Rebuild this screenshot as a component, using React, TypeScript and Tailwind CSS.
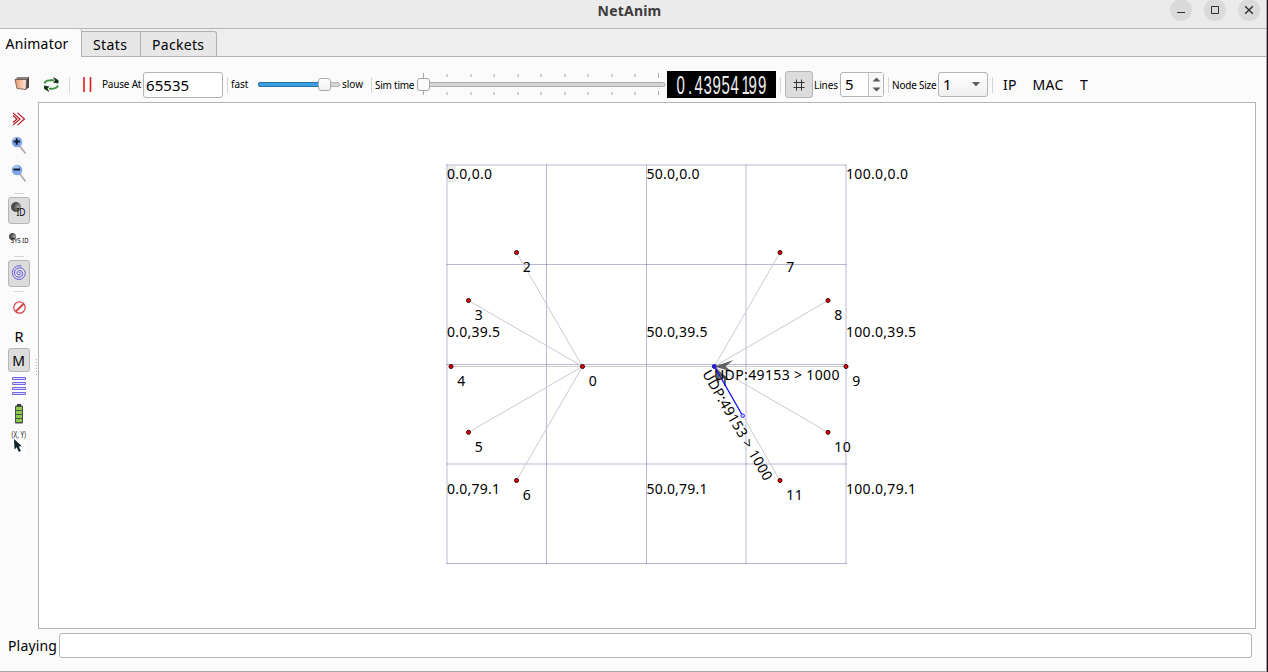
import type { ReactNode } from "react"

const nodes = [
  { id: "0", x: 582.5, y: 366.5 },
  { id: "2", x: 516.5, y: 252.5 },
  { id: "3", x: 468.5, y: 300.5 },
  { id: "4", x: 451, y: 366.5 },
  { id: "5", x: 468.5, y: 432.3 },
  { id: "6", x: 516.5, y: 480.5 },
  { id: "1", x: 714.3, y: 366.5 },
  { id: "7", x: 780, y: 252.5 },
  { id: "8", x: 828, y: 300.5 },
  { id: "9", x: 846, y: 366.5 },
  { id: "10", x: 828, y: 432.3 },
  { id: "11", x: 780, y: 480.5 },
]

const links = [
  ["0", "2"], ["0", "3"], ["0", "4"], ["0", "5"], ["0", "6"], ["0", "1"],
  ["1", "7"], ["1", "8"], ["1", "9"], ["1", "10"], ["1", "11"],
]

const gridX = [447, 546.5, 646.5, 746, 846]
const gridY = [165, 264.5, 364.5, 464, 563.5]

const coords = [
  { text: "0.0,0.0", x: 447, y: 179, w: 45 },
  { text: "50.0,0.0", x: 646.5, y: 179, w: 53 },
  { text: "100.0,0.0", x: 846, y: 179, w: 62 },
  { text: "0.0,39.5", x: 447, y: 337, w: 53 },
  { text: "50.0,39.5", x: 646.5, y: 337, w: 61 },
  { text: "100.0,39.5", x: 846, y: 337, w: 70 },
  { text: "0.0,79.1", x: 447, y: 494, w: 53 },
  { text: "50.0,79.1", x: 646.5, y: 494, w: 61 },
  { text: "100.0,79.1", x: 846, y: 494, w: 70 },
]

const ticks = [6.5, 30, 54, 77, 101, 124, 148, 171, 195, 218, 241.5]

// x of each character on the LCD
const lcd = [
  ["0", 9.5], [".", 21], ["4", 27.5], ["3", 36.5], ["9", 45.5],
  ["5", 54.5], ["4", 63.5], ["1", 74.5], ["9", 81.5], ["9", 91],
] as const

const find = (id: string) => nodes.find((n) => n.id === id)!

function Separator({ className }: { className: string }) {
  return <div className={`h-4 w-px shrink-0 bg-[#d6d6d6] ${className}`} />
}

function Cell({ className, children }: { className: string; children: ReactNode }) {
  return <div className={`flex h-[27px] shrink-0 items-center whitespace-nowrap ${className}`}>{children}</div>
}

function TitleBar() {
  return (
    <header className="flex h-[29px] shrink-0 border-b border-[#b7b7b7] bg-[#ebebeb]">
      <div className="w-[120px]" />
      <h1 className="flex-1 pt-px pr-[3px] text-center text-[14px] leading-[20px] font-bold tracking-[0.2px] text-[#3d3d3d]">
        NetAnim
      </h1>
      <div className="flex w-[124px] gap-[12px] pl-[28px]">
        <div className="-mt-px size-[22px] rounded-full bg-[#dadada]">
          <svg width="22" height="22" fill="none" stroke="#2e2e2e">
            <path d="M7 13.5h8" />
          </svg>
        </div>
        <div className="-mt-px size-[22px] rounded-full bg-[#dadada]">
          <svg width="22" height="22" fill="none" stroke="#2e2e2e">
            <path d="M7.5 7.5h7v7h-7z" />
          </svg>
        </div>
        <div className="-mt-px size-[22px] rounded-full bg-[#dadada]">
          <svg width="22" height="22" fill="none" stroke="#2e2e2e" strokeWidth="1.4">
            <path d="M7.2 7.2l7.6 7.6M14.8 7.2l-7.6 7.6" />
          </svg>
        </div>
      </div>
    </header>
  )
}

function Tabs() {
  return (
    <nav className="flex h-[28px] shrink-0 items-end bg-[#eeeeee] text-[14px]">
      <div className="h-[28px] w-[82px] rounded-tr-[3px] border-r border-[#b0b0b0] bg-[#fbfbfb] pt-[5px] pl-[5.5px] leading-[20px] tracking-[0.2px]">
        Animator
      </div>
      <div className="h-[26px] w-[59px] border-t border-r border-b border-[#b0b0b0] bg-[#e7e7e7] pt-[3px] pl-[11px] leading-[20px] tracking-[0.4px]">
        Stats
      </div>
      <div className="h-[26px] w-[76px] rounded-tr-[3px] border-t border-r border-b border-[#b0b0b0] bg-[#e7e7e7] pt-[3px] pl-[11px] leading-[20px] tracking-[0.3px]">
        Packets
      </div>
      <div className="h-[28px] flex-1 border-b border-[#b0b0b0]" />
    </nav>
  )
}

function Toolbar() {
  return (
    <div className="flex h-[45px] shrink-0 items-center pt-[10px] text-[10px]">
      <Cell className="w-[28px] pl-[14px]">
        <svg width="16" height="15" className="-mt-[3px] shrink-0">
          <defs>
            <linearGradient id="folder" x1="0" x2="1">
              <stop offset="0" stopColor="#e8976c" />
              <stop offset="1" stopColor="#fbe9df" />
            </linearGradient>
          </defs>
          <path d="M3.500 1h11.500v10.500L12 13.500 4 12z" fill="#4a4745" />
          <path d="M1 3.500L3.500 1H15l-2.500 2.500z" fill="#85817e" />
          <path d="M1 3.500h11.500L12 13.500 3 12.500z" fill="url(#folder)" stroke="#6a5145" strokeWidth=".8" />
        </svg>
      </Cell>
      <Cell className="w-[41px] pl-[15px]">
        <svg width="17" height="17" className="shrink-0" fill="none" strokeWidth="2">
          <path d="M1.500 7.500C2.500 4.500 5 4 11 4.300" stroke="#3f9142" />
          <path d="M10 .8L15.500 4.200V7.500L10 6.500 12 4.500z" fill="#173319" />
          <path d="M15 9.500c-1 3-3.500 3.500-9 3.200" stroke="#3f9142" />
          <path d="M6.500 16.200L1 12.800V9.500l5.500 1-2 2z" fill="#173319" />
        </svg>
      </Cell>
      <Separator className="" />
      <Cell className="w-[32px] pl-[12.5px]">
        <svg width="9" height="15" className="-mt-px shrink-0" stroke="#d9201f" strokeWidth="1.6">
          <path d="M1 0v15M7.500 0v15" />
        </svg>
      </Cell>
      <Cell className="w-[41px] tracking-[-0.2px]">Pause At</Cell>
      <div className="h-[26px] w-[80px] shrink-0 rounded-[3px] border border-[#b4b4b4] bg-white pl-[2px] text-[15px] leading-[24px] tracking-[0.05px]">
        65535
      </div>
      <Separator className="ml-[4px]" />
      <Cell className="w-[30px] pl-[3px]">fast</Cell>
      <Cell className="w-[84px]">
        <div className="flex h-[5px] w-[82px] items-center rounded-[2px] border border-[#b5b5b5] bg-[#d4d4d4]">
          <div className="-ml-px h-[5px] w-[62px] shrink-0 rounded-l-[2px] border border-[#2574a9] bg-[#3e9fe0]" />
          <div className="-ml-[2px] h-[13px] w-[13px] shrink-0 rounded-[3px] border border-[#a9a9a9] bg-linear-to-b from-white to-[#f1f1f1]" />
        </div>
      </Cell>
      <Cell className="w-[29px]">slow</Cell>
      <Separator className="" />
      <Cell className="w-[45px] pl-[3px] pt-[2px] tracking-[-0.25px]">Sim time</Cell>
      <Cell className="w-[250px]">
        <svg width="249" height="24" className="-mt-px shrink-0">
          {ticks.map((x, i) => (
            <path
              key={x}
              d={i === 0 || i === 10 ? `M${x} 1v5M${x} 19v4` : `M${x} 2v3M${x} 20v3`}
              stroke="#aaaaaa"
            />
          ))}
          <rect x="1" y="10.500" width="247" height="4" rx="1.500" fill="#d6d6d6" stroke="#adadad" />
          <rect x=".5" y="6.500" width="12" height="12" rx="2.500" fill="#fbfbfb" stroke="#a5a5a5" />
        </svg>
      </Cell>
      <div className="h-[27px] w-[109px] shrink-0 bg-black">
        <svg width="109" height="27" fill="#ececec" fontSize="25">
          {lcd.map(([ch, x]) => (
            <text key={x} transform={`translate(${x} 22.500) scale(.6 1)`} fontFamily="'Liberation Sans', sans-serif">
              {ch}
            </text>
          ))}
        </svg>
      </div>
      <Separator className="ml-[4px]" />
      <div className="ml-[4px] flex h-[27px] w-[28px] shrink-0 items-center justify-center rounded-[3px] border border-[#b5b5b5] bg-[#dcdcdc]">
        <svg width="12" height="12" stroke="#333" strokeWidth="1">
          <path d="M3.500.5v11M8.500.5v11M.5 3.500h11M.5 8.500h11" />
        </svg>
      </div>
      <Cell className="w-[27px] pl-px pt-[2px] tracking-[-0.1px]">Lines</Cell>
      <div className="flex h-[25px] w-[44px] shrink-0 rounded-[3px] border border-[#b4b4b4] bg-white">
        <div className="flex-1 pl-[4px] text-[15px] leading-[23px]">5</div>
        <div className="flex w-[15px] items-center justify-center border-l border-[#c4c4c4] bg-[#f8f8f8]">
          <svg width="9" height="15" fill="#5c5c5c">
            <path d="M.5 4.500L4.500.5l4 4zM.5 10.500l4 4 4-4z" />
          </svg>
        </div>
      </div>
      <Separator className="ml-[4px]" />
      <Cell className="w-[49px] pl-[3px] pt-[2px] tracking-[-0.22px]">Node Size</Cell>
      <div className="flex h-[25px] w-[50px] shrink-0 items-center justify-between rounded-[3px] border border-[#b4b4b4] bg-linear-to-b from-white to-[#f0f0f0] pr-[7px] pl-[4px] text-[15px]">
        <span>1</span>
        <svg width="8" height="5" fill="#5c5c5c">
          <path d="M0 0h8L4 4.500z" />
        </svg>
      </div>
      <Separator className="ml-[4px]" />
      <Cell className="w-[39px] pl-[10px] text-[14px] tracking-[0.3px]">IP</Cell>
      <Cell className="w-[47px] pl-[0.5px] text-[14px] tracking-[0.3px]">MAC</Cell>
      <Cell className="w-[12px] pl-px text-[14px]">T</Cell>
    </div>
  )
}

function Magnifier({ plus }: { plus?: boolean }) {
  return (
    <svg width="16" height="19">
      <path d="M8.500 9.500l6 8" stroke="#b5a7ae" strokeWidth="1.700" />
      <circle cx="6" cy="6" r="5.300" fill="#7da5e8" />
      <circle cx="5" cy="4" r="2.800" fill="#a9c6f2" />
      <path d={plus ? "M2.500 5.500h6.500M5.700 2.300v6.500" : "M2.500 5.500h6.500"} stroke="#111a33" strokeWidth="2" />
    </svg>
  )
}

function Divider() {
  return <div className="h-px w-[10px] shrink-0 bg-[#d6d6d6]" />
}

function Ball({ size, id }: { size: number; id: string }) {
  return (
    <>
      <defs>
        <radialGradient id={id} cx=".75" cy=".5">
          <stop offset="0" stopColor="#a5a5a5" />
          <stop offset="1" stopColor="#4a4a4a" />
        </radialGradient>
      </defs>
      <circle cx={size} cy={size} r={size} fill={`url(#${id})`} />
    </>
  )
}

function Sidebar() {
  return (
    <aside className="flex w-[38px] shrink-0">
      <div className="flex w-[36px] flex-col items-center pt-[4px] pl-[1px]">
        <div className="flex h-[26px] shrink-0 items-center">
          <svg width="14" height="14" fill="none" stroke="#b31218" strokeWidth="1.100">
            <path d="M1 .8l7 6.200-7 6.200M1 3.500L5 7l-4 3.500M5.500.8l7 6.200-7 6.200" />
          </svg>
        </div>
        <div className="flex h-[27px] shrink-0 items-center">
          <Magnifier plus />
        </div>
        <div className="flex h-[34px] shrink-0 items-start pt-[5px]">
          <Magnifier />
        </div>
        <Divider />
        <div className="mt-[3px] flex h-[27px] w-[22px] shrink-0 items-center justify-center rounded-[3px] border border-[#b5b5b5] bg-[#dcdcdc]">
          <svg width="16" height="17">
            <Ball size={5} id="ball-id" />
            <text x="5.500" y="14" fontSize="10" textLength="9" lengthAdjust="spacingAndGlyphs">ID</text>
          </svg>
        </div>
        <div className="flex h-[32px] shrink-0 items-center">
          <svg width="20" height="14" className="-mt-px">
            <Ball size={3.5} id="ball-sys" />
            <text x="2" y="10" fontSize="7.500" textLength="17.500" lengthAdjust="spacingAndGlyphs">SYS ID</text>
          </svg>
        </div>
        <Divider />
        <div className="mt-[3px] flex h-[27px] w-[22px] shrink-0 items-center justify-center rounded-[3px] border border-[#b5b5b5] bg-[#dcdcdc]">
          <svg width="16" height="16" className="-mt-px" fill="none" stroke="#6a5be0" strokeWidth="1">
            <path d="M8 8c0-1 1.600-.8 1.600.5S7 10.400 6.200 8.800 7 5.300 9 5.600s3.200 2.400 2.400 4.400-4 2.800-6 1.600-2.500-4.400-1.200-6.400 4.300-3 6.700-2 3.800 3.700 3.200 6.300-3 5-6 5-5.800-2-6.500-4.700S1.800 4 4 2.200 8.500.5 10.500 1" />
          </svg>
        </div>
        <div className="h-[4px] shrink-0" />
        <Divider />
        <div className="flex h-[31px] shrink-0 items-center">
          <svg width="14" height="14" fill="none" stroke="#d34a4a" strokeWidth="1.200">
            <circle cx="7.500" cy="6.500" r="5.700" />
            <path d="M3.500 10.800L11.700 2.700" strokeWidth="2" />
          </svg>
        </div>
        <div className="h-[25px] shrink-0 pt-[3px] pl-px text-[14.5px] leading-[20px]">R</div>
        <div className="h-[24px] w-[22px] shrink-0 rounded-[3px] border border-[#b5b5b5] bg-[#dcdcdc] text-center text-[14px] leading-[23px]">
          M
        </div>
        <svg width="14" height="19" className="mt-[4px] shrink-0" fill="#dedbff" stroke="#7466e5" strokeWidth="1">
          <path d="M.5 1.500h13v2H.5zM.5 6.500h13v2H.5zM.5 11.500h13v2H.5zM.5 16.500h13v2H.5z" />
        </svg>
        <svg width="10" height="20" className="mt-[9px] shrink-0">
          <path d="M3 0h4v2H3z" fill="#333" />
          <rect x="1" y="1.500" width="8" height="18" rx="1" fill="#4b4f4b" />
          <path d="M2 3h6v3H2zM2 7h6v3H2zM2 11h6v3H2zM2 15h6v3H2z" fill="#8dca4b" />
        </svg>
        <svg width="18" height="25" className="mt-[4px] shrink-0">
          <path d="M2 10h14v15H2z" fill="#fff" />
          <text x="1.500" y="9.500" fontSize="8" fill="#333" textLength="14.500" lengthAdjust="spacingAndGlyphs">(X, Y)</text>
          <path d="M4 11l.5 10.500 2.300-2.200 2 4.700 2-1-2-4.500 3-.3z" fill="#10242c" />
        </svg>
      </div>
      <svg width="2" height="17" className="mt-[257px]">
        <path d="M.5 0v17" stroke="#aaa" strokeDasharray="1 2" />
      </svg>
    </aside>
  )
}

function Topology() {
  return (
    <svg width="1216" height="525" viewBox="39 103 1216 525" fontSize="14" className="block">
      <rect x="448" y="166" width="8" height="16" fill="#ededed" />
      <g stroke="#00006a" strokeOpacity=".28">
        {gridX.map((x) => (
          <path key={x} d={`M${x} 164.500V564`} />
        ))}
        {gridY.map((y) => (
          <path key={y} d={`M446.500 ${y}H846.500`} />
        ))}
      </g>
      <g stroke="#cbcbcb">
        {links.map(([a, b]) => (
          <line key={a + b} x1={find(a).x} y1={find(a).y} x2={find(b).x} y2={find(b).y} />
        ))}
      </g>
      {coords.map((c) => (
        <text key={c.text} x={c.x} y={c.y} textLength={c.w}>
          {c.text}
        </text>
      ))}
      {nodes.map((n) => (
        <g key={n.id}>
          <circle cx={n.x} cy={n.y} r="2" fill={n.id === "1" ? "#2a1cff" : "#f00000"} stroke={n.id === "1" ? "#1a1aa0" : "#2a0000"} />
          <text x={n.x + 6.300} y={n.y + 19.500} textLength={n.id.length * 8.200}>
            {n.id}
          </text>
        </g>
      ))}
      {/* packets in flight towards node 1 */}
      <path d="M714.500 366.500l19-6.500-8 6.500 7 5.500z" fill="#4a4a4a" fillOpacity=".85" />
      <path d="M714.500 366.500l19-6.500-8 6.500 7 5.500z" fill="#4a4a4a" fillOpacity=".85" transform="rotate(60 714.500 366.500)" />
      <path d="M714.500 366.500L742.500 415.500" stroke="#1414ff" strokeWidth="1.300" />
      <circle cx="742.700" cy="415.700" r="1.800" fill="#ccccff" stroke="#3030ff" />
      <text x="714" y="380" textLength="125.500">
        UDP:49153 &gt; 1000
      </text>
      <text textLength="125" transform="translate(702 373.500) rotate(60)">
        UDP:49153 &gt; 1000
      </text>
    </svg>
  )
}

export default function App() {
  return (
    <div className="flex h-[672px] w-[1268px] overflow-hidden bg-[#2b0a1c] font-['Noto_Sans',sans-serif] text-black">
      <div className="flex w-[1267px] flex-col border-r border-b border-[#a5a5a5] bg-[#fbfbfb]">
        <TitleBar />
        <Tabs />
        <Toolbar />
        <main className="flex h-[527px] shrink-0">
          <Sidebar />
          <div className="w-[1218px] shrink-0 border border-[#b4b4b4] bg-white">
            <Topology />
          </div>
        </main>
        <footer className="flex pt-[4px] pl-[8px]">
          <div className="w-[51px] pt-[3px] text-[14px] leading-[20px] tracking-[0.15px]">Playing</div>
          <div className="h-[25px] w-[1193px] rounded-[3px] border border-[#b4b4b4] bg-white" />
        </footer>
      </div>
    </div>
  )
}
